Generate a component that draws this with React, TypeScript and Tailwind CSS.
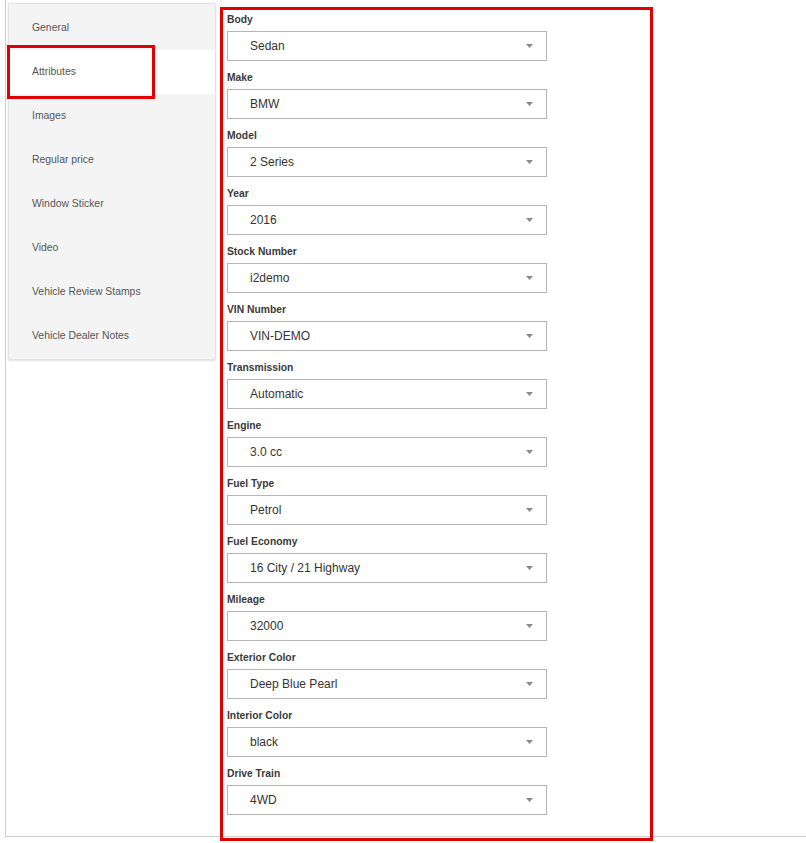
import React from 'react';

type Field = { label: string; value: string };

const tabs = [
  'General',
  'Attributes',
  'Images',
  'Regular price',
  'Window Sticker',
  'Video',
  'Vehicle Review Stamps',
  'Vehicle Dealer Notes',
];

const fields: Field[] = [
  { label: 'Body', value: 'Sedan' },
  { label: 'Make', value: 'BMW' },
  { label: 'Model', value: '2 Series' },
  { label: 'Year', value: '2016' },
  { label: 'Stock Number', value: 'i2demo' },
  { label: 'VIN Number', value: 'VIN-DEMO' },
  { label: 'Transmission', value: 'Automatic' },
  { label: 'Engine', value: '3.0 cc' },
  { label: 'Fuel Type', value: 'Petrol' },
  { label: 'Fuel Economy', value: '16 City / 21 Highway' },
  { label: 'Mileage', value: '32000' },
  { label: 'Exterior Color', value: 'Deep Blue Pearl' },
  { label: 'Interior Color', value: 'black' },
  { label: 'Drive Train', value: '4WD' },
];

function SelectBox({ value }: { value: string }) {
  return (
    <div className="flex items-center justify-between w-[320px] h-[30px] border border-[#b5b5b5] bg-white pl-[22px] pr-[13px]">
      <span className="text-[12px] text-[#333]">{value}</span>
      {/* caret */}
      <svg width="7" height="4" viewBox="0 0 7 4" className="block">
        <polygon points="0,0 7,0 3.5,4" fill="#8a8a8a" />
      </svg>
    </div>
  );
}

export default function App() {
  const active = 'Attributes';

  return (
    <div
      className="w-[806px] h-[843px] bg-white overflow-hidden"
      style={{ fontFamily: '"Liberation Sans", Arial, sans-serif' }}
    >
      <div className="ml-[5px] h-[837px] border-l border-b border-[#cfcfcf] flex items-start">
        {/* side tabs */}
        <div className="relative mt-[3px] ml-[2px] w-[208px] bg-[#f4f4f4] border border-[#e2e2e2] rounded-[2px] shadow-[0_1px_2px_rgba(0,0,0,0.12)] pt-[2px] pb-[1px]">
          {tabs.map((t) => (
            <div
              key={t}
              className={`h-[44px] flex items-center pl-[23px] text-[10.4px] text-[#555] ${
                t === active ? 'bg-white' : ''
              }`}
            >
              {t}
            </div>
          ))}
          <div className="absolute left-[-2px] top-[41px] w-[148px] h-[54px] border-[3px] border-[#e10000]" />
        </div>

        {/* attributes form */}
        <div className="ml-[4px] mt-[7px] w-[433px] h-[834px] border-[3px] border-[#e10000] pl-[4px] pt-[4px]">
          {fields.map((f) => (
            <div key={f.label} className="mb-[11px]">
              <div className="text-[10.3px] leading-[12px] font-bold text-[#3a3a3a] mb-[5px]">{f.label}</div>
              <SelectBox value={f.value} />
            </div>
          ))}
        </div>
      </div>
    </div>
  );
}
